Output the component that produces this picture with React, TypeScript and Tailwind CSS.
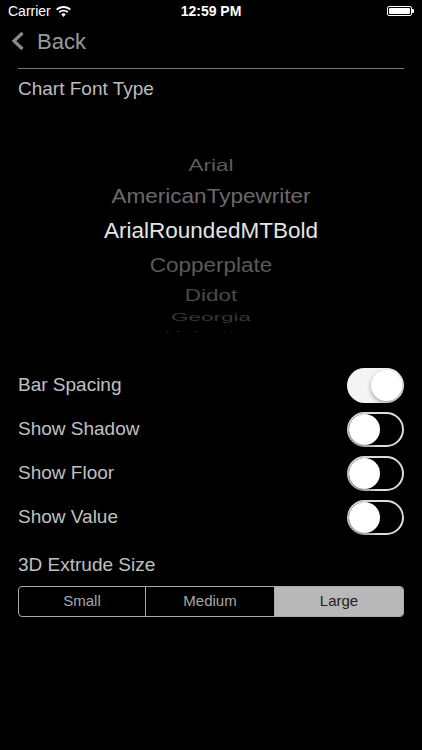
import React from "react";

const fonts = [
  { name: "Arial", h: "h-[30px]", color: "text-[#5c5c5c]", scale: "scale-y-[0.75]" },
  { name: "AmericanTypewriter", h: "h-[33px]", color: "text-[#6a6a6a]", scale: "scale-y-[0.88]" },
  { name: "ArialRoundedMTBold", h: "h-[35px]", color: "text-[#e4e4e4]", scale: "scale-y-100" },
  { name: "Copperplate", h: "h-[34px]", color: "text-[#5a5a5a]", scale: "scale-y-[0.87]" },
  { name: "Didot", h: "h-[26px]", color: "text-[#4a4a4a]", scale: "scale-y-[0.72]" },
  { name: "Georgia", h: "h-[18px]", color: "text-[#363636]", scale: "scale-y-[0.48]" },
  { name: "Helvetica", h: "h-[12px]", color: "text-[#2a2a2a]", scale: "scale-y-[0.25]" },
];

const switches = [
  { label: "Bar Spacing", on: true },
  { label: "Show Shadow", on: false },
  { label: "Show Floor", on: false },
  { label: "Show Value", on: false },
];

const Toggle = ({ on }: { on: boolean }) =>
  on ? (
    <div className="w-[57px] h-[35px] rounded-full bg-[#f4f4f4] flex items-center justify-end pr-[2px]">
      <div className="w-[31px] h-[31px] rounded-full bg-white shadow-[0_2px_4px_rgba(0,0,0,0.35)]" />
    </div>
  ) : (
    <div className="w-[57px] h-[35px] rounded-full border-2 border-[#dcdcdc] bg-black flex items-center">
      <div className="w-[31px] h-[31px] rounded-full bg-white shadow-[0_2px_4px_rgba(0,0,0,0.4)]" />
    </div>
  );

export default function App() {
  return (
    <div className="w-[422px] h-[750px] bg-black overflow-hidden font-['Liberation_Sans',Arial,sans-serif]">
      {/* status bar */}
      <div className="h-[22px] px-[8px] flex items-center justify-between text-white text-[14px]">
        <div className="flex items-center gap-[5px] w-[100px]">
          <span>Carrier</span>
          <svg width="15" height="11" viewBox="0 0 15 11" fill="white">
            <path d="M7.5 0C4.6 0 2 1.1 0 2.9l1.3 1.4C3 2.8 5.1 1.9 7.5 1.9s4.5.9 6.2 2.4L15 2.9C13 1.1 10.4 0 7.5 0z" />
            <path d="M7.5 3.7c-1.9 0-3.6.7-4.9 1.9l1.3 1.4c1-.9 2.2-1.4 3.6-1.4s2.6.5 3.6 1.4l1.3-1.4c-1.3-1.2-3-1.9-4.9-1.9z" />
            <path d="M7.5 7.3c-.9 0-1.6.3-2.3.9L7.5 11l2.3-2.8c-.7-.6-1.4-.9-2.3-.9z" />
          </svg>
        </div>
        <span className="font-semibold">12:59 PM</span>
        <div className="w-[100px] flex justify-end items-center">
          <div className="w-[25px] h-[10px] rounded-[2px] border border-white p-[1px]">
            <div className="w-full h-full bg-white rounded-[1px]" />
          </div>
          <div className="w-[2px] h-[4px] bg-white rounded-r-[1px]" />
        </div>
      </div>

      {/* nav */}
      <div className="h-[38px] flex items-center pl-[11px]">
        <svg width="14" height="20" viewBox="0 0 14 20" fill="none">
          <path d="M11.5 2L3 10l8.5 8" stroke="#8a8a8a" strokeWidth="3.2" />
        </svg>
        <span className="ml-[12px] text-[22px] text-[#9a9a9a]">Back</span>
      </div>
      <div className="mt-[8px] mx-[18px] h-px bg-[#7a7a7a]" />

      <div className="h-[40px] px-[18px] flex items-center text-[19px] text-[#bdbdbd]">
        Chart Font Type
      </div>

      {/* font picker */}
      <div className="mt-[42px] h-[181px] overflow-hidden flex flex-col">
        {fonts.map((f) => (
          <div key={f.name} className={`${f.h} shrink-0 flex items-center justify-center`}>
            <span className={`text-[22.5px] leading-none ${f.color} ${f.scale}`}>{f.name}</span>
          </div>
        ))}
      </div>

      {/* switches */}
      <div className="mt-[31px] px-[18px]">
        {switches.map((s) => (
          <div key={s.label} className="h-[44px] flex items-center justify-between">
            <span className="text-[19px] text-[#c0c0c0]">{s.label}</span>
            <Toggle on={s.on} />
          </div>
        ))}
      </div>

      <div className="h-[47px] pt-[6px] px-[18px] flex items-center text-[19px] text-[#c0c0c0]">
        3D Extrude Size
      </div>

      <div className="mx-[18px] h-[31px] rounded-[4px] border border-[#a8a8a8] flex overflow-hidden text-[15px]">
        <div className="w-[127px] flex items-center justify-center text-[#a8a8a8] border-r border-[#a8a8a8]">
          Small
        </div>
        <div className="w-[129px] flex items-center justify-center text-[#a8a8a8] border-r border-[#a8a8a8]">
          Medium
        </div>
        <div className="flex-1 flex items-center justify-center bg-[#b8b8b8] text-[#1e1e1e]">Large</div>
      </div>
    </div>
  );
}
